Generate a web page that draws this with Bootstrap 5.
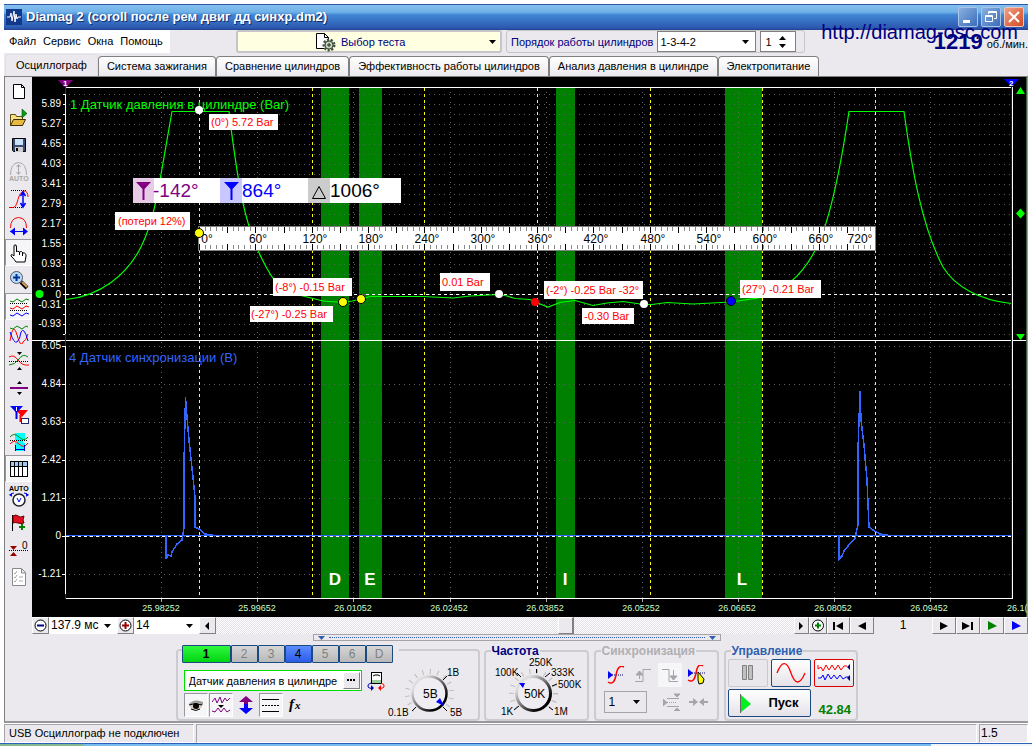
<!DOCTYPE html>
<html lang="ru">
<head>
<meta charset="utf-8">
<meta name="viewport" content="width=device-width, initial-scale=1">
<title>Diamag 2</title>
<link href="https://cdn.jsdelivr.net/npm/bootstrap@5.3.0/dist/css/bootstrap.min.css" rel="stylesheet">
<style>
:root{--face:#ebe9ed;--edge:#a5a4a8;--navy:#000080}
body{font:11px/14px "Liberation Sans",Arial,sans-serif;color:#000;background:#fff}
button,input,select{font:inherit;color:inherit}
button{padding:0}
svg{display:block;flex:none}
.window{margin:0 4px;padding-top:4px}
.face{background:var(--face)}
.titlebar{height:26px;padding:0 4px 0 2px;background:linear-gradient(#2c59a8 0,#2c59a8 1px,#86c0ee 1px,#70b2e8 8px,#3f85d4 11px,#3a78c8 15px,#2c58b0 24px,#20408c)}
.titlebar h1{font-size:13px;font-weight:700;line-height:24px;color:#fff;text-shadow:1px 1px 0 #10306c}
.capbtns{gap:3px}
.capbtn{width:20px;height:20px;border:1px solid #a9c4e8;border-radius:2px;background:linear-gradient(135deg,#8ab2e0,#3a6cb8)}
.capbtn.close-btn{background:linear-gradient(135deg,#f0a088,#d24a20);border-color:#f0c4b8}
.menurow{height:24px}
.menu{background:#fff;height:23px;width:166px;padding:0 5px;gap:7px}
.menu a{color:#000;text-decoration:none;line-height:23px}
.testpick{width:266px;height:23px;margin-left:66px;background:#ffffe1;border:2px solid #c6c5c9;border-radius:3px;color:var(--navy)}
.testpick svg:first-child{margin-left:77px}
.order{height:23px;margin-left:4px;padding-left:4px;border:1px solid #c6c5c9;border-radius:3px;color:var(--navy);width:299px;gap:4px}
.well{appearance:none;border:1px solid #808080;background:#fff;color:#000;border-radius:0}
.arrowed{background:#fff url("data:image/svg+xml,%3Csvg xmlns='http://www.w3.org/2000/svg' width='7' height='4'%3E%3Cpath d='M0 0h7L3.500 4z'/%3E%3C/svg%3E") no-repeat right 6px center}
.rpm{font-size:22px;font-weight:700;line-height:22px;color:var(--navy)}
.watermark{position:absolute;right:10px;top:20px;font-size:20px;line-height:24px;color:var(--navy);white-space:nowrap}
.nav-tabs.scopes{--bs-nav-tabs-border-width:0;height:23px;border-bottom:1px solid #808080;padding-left:1px}
.scopes .nav-link{border:1px solid #808080;border-bottom:0;border-radius:4px 4px 0 0;margin:0;height:20px;padding:0 8px;line-height:19px;color:#000;background:linear-gradient(#fff,#ebe9ed)}
.scopes .nav-link.active{height:22px;line-height:20px;padding:0 10px;background:var(--face);color:#000}
.pane{border-left:1px solid #808080;border-bottom:2px solid #98979b}
.tools{width:27px}
.tool{width:27px;height:27px;border:0;background:none;display:flex;align-items:center;justify-content:center}
.mini{width:24px;height:24px;border:0;background:none;display:flex;align-items:center;justify-content:center}
.sunk{border:1px solid;border-color:#98979b #fff #fff #98979b;background:#f6f5f8}
.btn3d{border:1px solid;border-color:#fff #808080 #808080 #fff;background:var(--face);height:17px;display:flex;align-items:center;justify-content:center;flex:none}
.transport{height:17px}
.transport .well{border:0;height:17px;line-height:17px;font-size:12px;padding:0 2px}
.scroller{appearance:none;flex:1 1 0;min-width:0;height:17px;margin:0;background:repeating-conic-gradient(#fff 0 25%,#e2e0e6 0 50%) 0 0/2px 2px}
.scroller::-webkit-slider-thumb{appearance:none;width:16px;height:17px;background:var(--face);border:1px solid;border-color:#fff #808080 #808080 #fff;border-right-width:2px}
.splitter{width:408px;height:7px;border:1px solid var(--edge);color:#2f5fb0}
.splitter i{flex:1;height:0;border-top:1px dotted #2f5fb0;margin:0 4px}
.panels{padding-top:6px}
.panel{border:2px solid #cccbcf;border-radius:4px;min-width:0;margin:0;padding:0}
.channels{width:304px;height:72px;margin-top:2px}
fieldset.panel{height:74px}
.panel > legend{float:none;width:auto;margin:0 0 0 5px;padding:0 1px;font-size:12px;font-weight:700;line-height:8px;height:8px}
.chan{width:27px;height:18px;border:1px solid #1b4a80;border-radius:1px;background:linear-gradient(#d6d6d6,#b8b8b8);color:#808080;font-size:12px;line-height:15px}
.chanset{margin:-6px 0 0 4px;padding-right:6px;width:max-content;background:var(--face)}
.chan.first{width:49px;background:linear-gradient(#30f840,#00d410);color:#000;font-weight:700}
.chan.blue{background:linear-gradient(#5c8cff,#2c5ce8);color:#000}
.inputs{padding:7px 0 0 6px}
.sensor{width:178px;height:21px;border:1px solid #00e000;background:#fff;padding:1px}
.sensor input{border:0;flex:1;min-width:0;padding:0 3px;background:none}
.minis{gap:1px;margin-top:2px}
.run{border:1px solid #1b4a80;border-radius:2px;background:linear-gradient(#fff,#e4e2e8);display:flex;align-items:center;justify-content:center;width:40px;height:28px}
.run.off{border-color:#c8c7cb;background:#e9e7eb}
.run.red{border-color:#e00000}
.run.start{width:83px;font-size:13px;font-weight:700;gap:18px}
.green{color:#008000;font-size:13px;font-weight:700}
.status{height:19px;margin-top:1px;gap:2px}
.cell{border:1px solid;border-color:var(--edge) #fff #fff var(--edge);line-height:17px;padding-left:4px}
.tray{height:3px;background:linear-gradient(90deg,#86b890 0 84px,#78bcf0 84px 931px,#eef6fc 931px);border-top:1px solid #2f60b8}
.crisp{shape-rendering:crispEdges}
.lbl{fill:#f00;font-size:11px}
</style>
</head>
<body>
<div class="window position-relative">
 <header class="titlebar d-flex align-items-center">
  <svg width="16" height="16" viewBox="0 0 16 16"><rect width="16" height="16" fill="#12388c"/><path d="M1 8h3l1-4 1 8 2-10 1 11 1-8 1 5 1-2h3" fill="none" stroke="#fff"/></svg>
  <h1 class="m-0 ms-1 flex-grow-1">Diamag 2 (coroll после рем двиг дд синхр.dm2)</h1>
  <div class="capbtns d-flex">
   <button class="capbtn" aria-label="Свернуть"><svg width="18" height="18"><path d="M4 12h7v3H4z" fill="#fff"/></svg></button>
   <button class="capbtn" aria-label="Восстановить"><svg width="18" height="18" fill="none" stroke="#fff"><path d="M6.500 6V3.500h8v7H12M3.500 7.500h7v6h-7zM3 8.500h8M6 4.500h8"/></svg></button>
   <button class="capbtn close-btn" aria-label="Закрыть"><svg width="18" height="18" stroke="#fff" stroke-width="2"><path d="M4 4l10 10M14 4L4 14"/></svg></button>
  </div>
 </header>
 <div class="menurow face d-flex">
  <nav class="menu d-flex"><a href="#">Файл</a><a href="#">Сервис</a><a href="#">Окна</a><a href="#">Помощь</a></nav>
  <button class="testpick d-flex align-items-center">
   <svg width="22" height="20" viewBox="0 0 22 20"><path d="M1.500 1.500h8l4 4v11h-12z" fill="#fff" stroke="#000"/><path d="M9.500 1.500v4h4" fill="none" stroke="#000"/><circle cx="14" cy="13" r="5" fill="#b8c8b0" stroke="#405040" stroke-width="3" stroke-dasharray="2 1.500"/><circle cx="14" cy="13" r="4" fill="#c4d4bc" stroke="#405040"/><path d="M12 13h4M14 11v4" stroke="#203020"/></svg>
   <span class="ms-1 flex-grow-1 text-start">Выбор теста</span>
   <svg width="7" height="4" class="me-1"><path d="M0 0h7L3.500 4z"/></svg>
  </button>
  <div class="order d-flex align-items-center"><label for="ord">Порядок работы цилиндров</label>
   <select id="ord" class="well arrowed" style="width:99px;height:21px;padding:0 2px"><option>1-3-4-2</option></select>
   <div class="well d-flex align-items-center" style="width:36px;height:21px"><input aria-label="Цилиндр" value="1" class="border-0 p-0 ps-1" style="width:18px">
    <svg width="8" height="14"><path d="M0 5h7L3.500 1zM0 9h7l-3.500 4z"/></svg></div>
  </div>
  <div class="ms-auto d-flex align-items-center"><span class="rpm">1219</span><span class="ms-1 pt-1">об./мин.</span></div>
 </div>
 <div class="watermark">http://diamag-osc.com</div>
 <ul class="nav nav-tabs scopes face align-items-end flex-nowrap">
  <li class="nav-item"><a class="nav-link active" href="#">Осциллограф</a></li>
  <li class="nav-item"><a class="nav-link" href="#">Система зажигания</a></li>
  <li class="nav-item"><a class="nav-link" href="#">Сравнение цилиндров</a></li>
  <li class="nav-item"><a class="nav-link" href="#">Эффективность работы цилиндров</a></li>
  <li class="nav-item"><a class="nav-link" href="#">Анализ давления в цилиндре</a></li>
  <li class="nav-item"><a class="nav-link" href="#">Электропитание</a></li>
 </ul>
 <main class="pane face">
 <div class="d-flex">
  <div class="tools flex-shrink-0">
   <button class="tool" aria-label="Новый"><svg width="20" height="20"><path d="M4.500 3.500h8l3 3v11h-11zM12.500 3.500v3h3" fill="#fff" stroke="#000"/></svg></button>
   <button class="tool" aria-label="Открыть"><svg width="20" height="20"><path d="M1.500 17.500v-11h5l1 2h6v9z" fill="#f8e088" stroke="#605010"/><path d="M1.500 17.500l3-6h12l-3 6z" fill="#e8b840" stroke="#403000"/><path d="M13 1v9l5-4.500z" fill="#00a010" stroke="#003000" stroke-width=".5"/></svg></button>
   <button class="tool" aria-label="Сохранить"><svg width="20" height="20"><path d="M3.500 3.500h13v13h-12l-1-1z" fill="#3a4a78" stroke="#000"/><path d="M6 4h8v6H6z" fill="#c8e0f8"/><path d="M6 12h8v5H6z" fill="#ccc"/><path d="M7 13h2v3H7z" fill="#000"/></svg></button>
   <button class="tool" aria-label="Авто амплитуда" disabled><svg width="22" height="22" fill="none" stroke="#a8a8a8"><path d="M2.500 14q0-12 8-12.500 8 .5 8 12.500M10.500 4v9M8.500 6l2-2.500 2 2.500M8.500 11l2 2.500 2-2.500"/><text x="1" y="20" font-size="7" font-weight="700" fill="#a8a8a8" stroke="none">AUTO</text></svg></button>
   <button class="tool" aria-label="Амплитуда"><svg width="20" height="20" fill="none"><path d="M0 18.500h4q3 0 5-8t6-8.500q4 0 4 6" stroke="#f00"/><path d="M2 1.500h15M2 18.500h12" stroke="#000" stroke-dasharray="1 1"/><path d="M14 4v13M11.500 7L14 3l2.500 4M11.500 14l2.500 4 2.500-4" stroke="#00f" stroke-width="1.500"/></svg></button>
   <button class="tool" aria-label="Период"><svg width="20" height="20" fill="none"><path d="M1.500 12q0-10 8-10.500 8 .5 8 10.500" stroke="#f00"/><path d="M1 15.500h17" stroke="#00f"/><path d="M1 15.500l5-4v8zM19 15.500l-5-4v8z" fill="#00f"/></svg></button>
   <button class="tool sunk" aria-label="Рука"><svg width="20" height="20"><path d="M5.500 2q2-1 2 2v5l1-1 2 1 2-.5 1.500 1.500h1.500q2 1 1.500 3l-1 6h-9q-1-2-5-6 0-3 3 0V3z" fill="#fff" stroke="#000"/><path d="M10.500 9v3M13.500 10v3" stroke="#000"/></svg></button>
   <button class="tool" aria-label="Лупа"><svg width="20" height="20"><circle cx="7.500" cy="7.500" r="6" fill="#b8dcf8" stroke="#556"/><path d="M4 7.500h7M7.500 4v7" stroke="#00309c" stroke-width="2"/><path d="M12 12l6 6" stroke="#000" stroke-width="4"/><path d="M13 12l5 5" stroke="#d8a060" stroke-width="2"/></svg></button>
   <button class="tool sunk" aria-label="Раздельные осциллограммы"><svg width="20" height="20" fill="none"><path d="M1 4l3 1 4-3 5 3 4-3 3 1" stroke="#080"/><path d="M1 11l3 1 4-3 5 3 4-3 3 1" stroke="#f00"/><path d="M1 18l3 1 4-3 5 3 4-3 3 1" stroke="#00f"/><path d="M1 6.500h18M1 13.500h18" stroke="#000" stroke-dasharray="1 1"/></svg></button>
   <button class="tool" aria-label="Совмещённые"><svg width="20" height="20" fill="none"><path d="M1 4l3 1 4-3 5 3 4-3 2 1" stroke="#080"/><path d="M1 17q3-20 7-6t6 7q3-1 5-8" stroke="#f00"/><path d="M1 8q4 12 7 10 3-2 4-10 3-6 7 9" stroke="#00f"/></svg></button>
   <button class="tool" aria-label="Нулевая линия"><svg width="20" height="20" fill="none"><path d="M0 6q5-3 9 3t11 5" stroke="#f00"/><path d="M0 14q6 0 10-6t9-2" stroke="#080"/><path d="M0 10.500h20" stroke="#000" stroke-dasharray="1 1"/><path d="M8 1h5l-2.500 3zM8 19h5l-2.500-3z" fill="#000"/></svg></button>
   <button class="tool" aria-label="Разделитель"><svg width="20" height="20"><path d="M1 9h18v2H1z" fill="#800080"/><path d="M8 6h5l-2.500-3zM8 14h5l-2.500 3z"/></svg></button>
   <button class="tool" aria-label="Маркеры"><svg width="20" height="20"><path d="M7 5h12l-6 7z" fill="#f00"/><path d="M1 1h13L7.500 8z" fill="#00f"/><path d="M7.500 6v8" stroke="#00f" stroke-width="2"/><path d="M11.500 10v7" stroke="#f00" stroke-width="2"/><path d="M7.500 2v4" stroke="#fff"/><rect x="12.500" y="13.500" width="7" height="5" fill="#fff" stroke="#226"/></svg></button>
   <button class="tool" aria-label="Интервал"><svg width="20" height="20" fill="none"><path d="M6 1h10v7h-2v3h2v8H6v-8h2V8H6z" fill="#0ff"/><path d="M1 5q4-5 9 0t9 0" stroke="#080"/><path d="M1 12q4-5 9 0t9-1" stroke="#f00"/><path d="M1 8.500h18" stroke="#000" stroke-dasharray="1 1"/><path d="M6.500 13v6M15.500 13v6M7 17.500h8" stroke="#00c"/></svg></button>
   <button class="tool sunk" aria-label="Таблица"><svg width="20" height="20" class="crisp"><rect x="1.500" y="2.500" width="17" height="15" fill="#fff" stroke="#000"/><path d="M2 3h16v4H2z" fill="#a0c8f0"/><path d="M2 7.500h16M5.500 3v14M9.500 3v14M13.500 3v14" stroke="#000"/></svg></button>
   <button class="tool" aria-label="Авто вольт"><svg width="22" height="24"><text x="1" y="7" font-size="7" font-weight="700">AUTO</text><circle cx="11" cy="16" r="6" fill="#fff" stroke="#222" stroke-width="1.500"/><path d="M9 14l2 4 2-4" fill="none" stroke="#00f"/><path d="M2 12q0-3 4-3M20 12q0-3-4-3" fill="none" stroke="#00f"/><path d="M1 10h3v3zM21 10h-3v3z" fill="#00f"/></svg></button>
   <button class="tool" aria-label="Добавить закладку"><svg width="20" height="20"><path d="M3.500 2v16" stroke="#000"/><path d="M4 3q3-2 5 0t6 0l-1 4 1 3q-3 1-6 0t-5 0z" fill="#e01020" stroke="#600"/><path d="M13 11v6M10 14h6" stroke="#008000" stroke-width="2"/></svg></button>
   <button class="tool" aria-label="Установить ноль"><svg width="22" height="24"><path d="M2 8h7l-3.500 4zM2 18h7l-3.500-4z" fill="#900"/><path d="M1 12.500h19" stroke="#000" stroke-dasharray="1 1"/><text x="14" y="11" font-size="10">0</text></svg></button>
   <button class="tool" aria-label="Список" disabled><svg width="20" height="20" fill="none" stroke="#888"><path d="M3.500 1.500h9l4 4v13h-13zM12.500 2v4h4" fill="#fff"/><path d="M5 6l1 1 2-3M5 10l1 1 2-3M5 14l1 1 2-3M10 10h4M10 14h4" stroke="#aaa"/></svg></button>
  </div>
  <div class="flex-grow-1" style="min-width:0">
  <svg class="w-100" viewBox="32 77 996 540" font-family="Liberation Sans,Arial,sans-serif">
   <defs>
    <pattern id="dotsA" x="69" y="94" width="5" height="10" patternUnits="userSpaceOnUse"><path d="M0 0h1v1H0z" fill="#606060"/></pattern>
    <pattern id="dotsB" x="69" y="346" width="5" height="38" patternUnits="userSpaceOnUse"><path d="M0 0h1v1H0z" fill="#606060"/></pattern>
    <pattern id="tickA" x="62" y="94" width="4" height="10" patternUnits="userSpaceOnUse"><path d="M1 0h3v1H1z" fill="#fff"/></pattern>
    <pattern id="tickB" x="62" y="346" width="4" height="38" patternUnits="userSpaceOnUse"><path d="M0 0h4v1H0z" fill="#fff"/></pattern>
   </defs>
   <rect x="32" y="77" width="996" height="540"/>
   <g class="crisp">
    <path d="M321 88h28v510h-28zM359 88h23v510h-23zM556 88h19v510h-19zM725 88h37v510h-37z" fill="#008000"/>
    <rect x="66" y="90" width="945" height="250" fill="url(#dotsA)"/>
    <rect x="66" y="342" width="945" height="255" fill="url(#dotsB)"/>
    <path d="M161.500 92v506M257.500 92v506M353.500 92v506M450.500 92v506M546.500 92v506M642.500 92v506M738.500 92v506M834.500 92v506M930.500 92v506" stroke="#666" stroke-dasharray="1 4"/>
    <path d="M161.500 599v3M257.500 599v3M353.500 599v3M450.500 599v3M546.500 599v3M642.500 599v3M738.500 599v3M834.500 599v3M930.500 599v3" stroke="#aaa"/>
    <path d="M66 294.500h945M66 536.500h945" stroke="#fff" stroke-dasharray="3 3"/>
    <path d="M199.500 88v510M312.500 88v510M424.500 88v510M537.500 88v510M650.500 88v510M762.500 88v510M875.500 88v510" stroke="#ff0" stroke-dasharray="3 3"/>
    <path d="M65 87.500h948M32 340.500h995M65 598.500h948M65.500 87v512M1012.500 87v512" stroke="#fff"/>
    <rect x="62" y="92" width="4" height="246" fill="url(#tickA)"/><rect x="62" y="344" width="4" height="250" fill="url(#tickB)"/>
    <path d="M1011.500 87v511" stroke="#00f" /><path d="M65.500 80v14M65.500 334v12M65.500 594v5" stroke="#800080"/>
    <path d="M1026.500 77v540" stroke="#406040"/><path d="M1027.500 77v540" stroke="#999"/>
   </g>
   <path d="M58 80h15l-7.500 8z" fill="#800080"/><path d="M1004 79h15l-7.500 8z" fill="#00f"/>
   <g font-size="8" font-weight="700" fill="#fff"><text x="63" y="86">1</text><text x="1009" y="86">2</text></g>
   <path d="M1016 94h9l-4.500-7zM1016 334h9l-4.500 6zM1016 213.500l4.500-5 4.500 5-4.500 5z" fill="#0f0"/>
   <g font-size="13"><text x="70" y="109" fill="#0f0">1 Датчик давления в цилиндре (Bar)</text><text x="69" y="362" fill="#36f">4 Датчик синхронизации (В)</text></g>
   <path fill="none" stroke-width="1.200" stroke="#0f0" d="M66 299.500C100 296 127 275 141 247S158 190 172 111.500H229L231 128C238 180 243 220 261 257S285 290 303 296L323 301L343 302.500L352 301L361 299L370 296.500H423L453 298L470 296L499 294.500L507 296L515 298.500L530 299.500L535 302L548 307L560 302.500L575 300.500L593 305.500L607 303L623 301.500L644 304.500H652L667 302.500L693 304L731 302L758 298L778 290C795 282 812 262 822 235S841 165 849 111.500H904C912 170 922 227 943 267C955 287 980 300 1011 303.500"/>
   <path class="crisp" fill="none" stroke="#36f" stroke-width="1.500" d="M66 535.500H166V559L168 555L171 556L172 552L177 544L182 540L184 527V463L185.500 397L187 417L189 440L192 468L195 497V527L199 529L205 534L215 535.500H839V559L842 556L844 551L848 546L855 538L858 525V450L860 391L861 420L864 445L867 480L869 527L873 530L880 534L890 535.500H1011"/>
   <path class="crisp" d="M66 535.500h945" stroke="#36f"/>
   <g fill="#fff" font-size="10" text-anchor="end">
    <text x="61" y="107">5.89</text><text x="61" y="127">5.27</text><text x="61" y="147">4.65</text><text x="61" y="167">4.03</text><text x="61" y="187">3.41</text><text x="61" y="207">2.79</text><text x="61" y="227">2.17</text><text x="61" y="247">1.55</text><text x="61" y="267">0.93</text><text x="61" y="287">0.31</text><text x="61" y="298">0</text><text x="61" y="308">-0.31</text><text x="61" y="327">-0.93</text>
    <text x="61" y="349">6.05</text><text x="61" y="387">4.84</text><text x="61" y="425">3.63</text><text x="61" y="463">2.42</text><text x="61" y="501">1.21</text><text x="61" y="539">0</text><text x="61" y="577">-1.21</text>
   </g>
   <g fill="#cfc" font-size="9" text-anchor="middle"><text x="161" y="611">25.98252</text><text x="257" y="611">25.99652</text><text x="353" y="611">26.01052</text><text x="449" y="611">26.02452</text><text x="545" y="611">26.03852</text><text x="641" y="611">26.05252</text><text x="737" y="611">26.06652</text><text x="833" y="611">26.08052</text><text x="929" y="611">26.09452</text></g>
   <text x="1007" y="611" fill="#cfc" font-size="9">26.1(</text>
   <g fill="#fff" font-size="17" font-weight="700" text-anchor="middle"><text x="335" y="585">D</text><text x="370" y="585">E</text><text x="565" y="585">I</text><text x="742" y="585">L</text></g>
   <g class="crisp"><path d="M198 226h677v24H198z" fill="#fff" stroke="#808080"/>
    <path d="M199 229h676M199 247h676" stroke="#888" stroke-width="4" stroke-dasharray="1 4.635"/>
    <path d="M199 229.500h676M199 246.500h676" stroke="#000" stroke-width="6" stroke-dasharray="1 27.170"/></g>
   <g font-size="12" text-anchor="middle"><text x="207" y="243">0°</text><text x="258" y="243">60°</text><text x="315" y="243">120°</text><text x="371" y="243">180°</text><text x="427" y="243">240°</text><text x="483" y="243">300°</text><text x="540" y="243">360°</text><text x="596" y="243">420°</text><text x="653" y="243">480°</text><text x="709" y="243">540°</text><text x="765" y="243">600°</text><text x="821" y="243">660°</text><text x="860" y="243">720°</text></g>
   <path d="M133 178h268v25H133z" fill="#fff"/><path d="M133 178h21v25h-21z" fill="#e5cbe5"/><path d="M220 178h22v25h-22z" fill="#c8c8ff"/><path d="M308 178h22v25h-22z" fill="#ccc"/>
   <path d="M136 182h15l-6.500 7v11h-2v-11z" fill="#800080"/><path d="M224 182h15l-6.500 7v11h-2v-11z" fill="#00f"/><path d="M312.500 198.500h13l-6.500-12z" fill="none" stroke="#000"/>
   <g font-size="19"><text x="153" y="197" fill="#800080">-142°</text><text x="242" y="197" fill="#00f">864°</text><text x="330" y="197">1006°</text></g>
   <path d="M209 114h69v16h-69zM115 212h75v18h-75zM273 278h79v18h-79zM250 306h83v16h-83zM440 273h50v18h-50zM544 281h99v18h-99zM582 308h52v16h-52zM740 280h81v18h-81z" fill="#fff"/>
   <g class="lbl"><text x="211" y="126">(0°) 5.72 Bar</text><text x="118" y="225">(потери 12%)</text><text x="275" y="291">(-8°) -0.15 Bar</text><text x="251" y="318">(-27°) -0.25 Bar</text><text x="442" y="286">0.01 Bar</text><text x="546" y="294">(-2°) -0.25 Bar -32°</text><text x="584" y="320">-0.30 Bar</text><text x="742" y="293">(27°) -0.21 Bar</text></g>
   <g fill="#fff"><circle cx="199" cy="110" r="4"/><circle cx="499" cy="294" r="4"/><circle cx="644" cy="304" r="4"/><circle cx="535" cy="302" r="4" fill="#f00"/><circle cx="39.500" cy="294" r="4" fill="#0f0"/></g>
   <g fill="#ff0" stroke="#000"><circle cx="199" cy="233" r="4.500"/><circle cx="343" cy="302" r="4.500"/><circle cx="361" cy="299" r="4.500"/><circle cx="731" cy="301" r="4.500" fill="#00f"/></g>
  </svg>
  <div class="transport d-flex">
   <button class="btn3d" style="width:17px" aria-label="Уменьшить"><svg width="15" height="15"><circle cx="7.500" cy="7.500" r="5.500" fill="#fff" stroke="#000"/><path d="M4 7.500h7" stroke="#000080" stroke-width="2"/></svg></button>
   <select class="well arrowed" style="width:68px" aria-label="Развёртка"><option>137.9 мс</option></select>
   <button class="btn3d" style="width:17px" aria-label="Увеличить"><svg width="15" height="15"><circle cx="7.500" cy="7.500" r="5.500" fill="#fff" stroke="#000"/><path d="M4 7.500h7M7.500 4v7" stroke="#900" stroke-width="2"/></svg></button>
   <select class="well arrowed" style="width:65px" aria-label="Масштаб"><option>14</option></select>
   <button class="btn3d" style="width:17px" aria-label="Влево"><svg width="5" height="8"><path d="M4 0v8L0 4z"/></svg></button>
   <input type="range" class="scroller" min="0" max="1000" value="608" aria-label="Положение">
   <button class="btn3d" style="width:15px" aria-label="Вправо"><svg width="5" height="8"><path d="M0 0v8l4-4z"/></svg></button>
   <button class="btn3d" style="width:18px" aria-label="Приблизить"><svg width="14" height="15"><circle cx="7" cy="7.500" r="5.500" fill="#fff" stroke="#000"/><path d="M4 7.500h6M7 4.500v6" stroke="#008000" stroke-width="2"/></svg></button>
   <button class="btn3d" style="width:23px" aria-label="В начало"><svg width="12" height="8"><path d="M0 0h2v8H0zM10 0v8L3 4z"/></svg></button>
   <button class="btn3d" style="width:24px" aria-label="Назад"><svg width="9" height="8"><path d="M8 0v8L0 4z"/></svg></button>
   <output class="text-center" style="width:58px;font-size:12px;line-height:17px">1</output>
   <button class="btn3d" style="width:24px" aria-label="Вперёд"><svg width="9" height="8"><path d="M0 0v8l8-4z"/></svg></button>
   <button class="btn3d" style="width:24px" aria-label="В конец"><svg width="12" height="8"><path d="M0 0v8l8-4zM9 0h2v8H9z"/></svg></button>
   <button class="btn3d" style="width:24px" aria-label="Воспроизвести"><svg width="9" height="9"><path d="M0 0v9l9-4z" fill="#008000"/></svg></button>
   <button class="btn3d" style="width:24px" aria-label="Далее"><svg width="9" height="9"><path d="M0 0v9l9-4z" fill="#00f"/></svg></button>
  </div>
  </div>
 </div>
  <div class="splitter mx-auto d-flex align-items-center px-1"><svg width="7" height="4" fill="#2f5fb0"><path d="M0 0h7L3.500 4z"/></svg><i></i><svg width="7" height="4" fill="#2f5fb0"><path d="M0 0h7L3.500 4z"/></svg></div>
  <div class="panels d-flex justify-content-center">
   <div class="panel channels">
    <div class="chanset d-flex"><button class="chan first">1</button><button class="chan">2</button><button class="chan">3</button><button class="chan blue">4</button><button class="chan">5</button><button class="chan">6</button><button class="chan">D</button></div>
    <div class="d-flex">
     <div class="inputs">
      <div class="d-flex align-items-center"><div class="sensor d-flex"><input aria-label="Датчик" value="Датчик давления в цилиндре"><button class="btn3d" style="width:17px" aria-label="Выбрать датчик"><svg width="9" height="3"><path d="M0 0h2v2H0zM3 0h2v2H3zM6 0h2v2H6z"/></svg></button></div>
       <button class="border-0 bg-transparent ms-1" aria-label="Прибор"><svg width="20" height="20" viewBox="0 0 20 20"><rect x="5.500" y="1.500" width="10" height="11" fill="#fff" stroke="#000"/><path d="M6 9h9v3H6z" fill="#9c9"/><path d="M7 5l2-1h3l2 1" stroke="#000" fill="none"/><path d="M5 12q-4 1-3 4 2 2 4 1" fill="none" stroke="#00a"/><path d="M15 12q4 1 3 4-2 2-4 1" fill="none" stroke="#f00"/><path d="M5 14v6l3-3z" fill="#00a"/><path d="M15 14v6l-3-3z" fill="#f00"/></svg></button></div>
      <div class="d-flex minis">
       <button class="mini sunk" aria-label="Показать"><svg width="16" height="14"><path d="M1 6q5-6 14-2v3H3z" fill="#999"/><ellipse cx="8" cy="8" rx="6" ry="3.500" fill="#d8c8b8"/><circle cx="8" cy="8" r="3"/><path d="M1 7q6-3 13 0M3 11q5 3 9 0" fill="none" stroke="#000"/></svg></button>
       <button class="mini sunk" aria-label="Фильтр"><svg width="18" height="18" fill="none" stroke="#800080"><path d="M0 6l3-4 2 5 3-6 2 6 3-5 2 3 3-3M0 15l3 1 3-4 3 4 3-4 3 4 3-2"/><path d="M6 9h6l-3 3z" fill="#000" stroke="none"/></svg></button>
       <button class="mini" aria-label="Инвертировать"><svg width="14" height="18"><path d="M7 0l7 6H9v4H5V6H0z" fill="#800080"/><path d="M7 18l7-6H9V8H5v4H0z" fill="#00f"/></svg></button>
       <button class="mini sunk" aria-label="Линии"><svg width="18" height="16" class="crisp" stroke="#000"><path d="M0 2.500h17M0 14.500h17"/><path d="M0 8.500h17" stroke-dasharray="2 1"/></svg></button>
       <button class="mini" aria-label="Функция"><svg width="16" height="18"><text x="1" y="13" font-family="Liberation Serif,serif" font-style="italic" font-weight="700" font-size="15">f</text><text x="7" y="13" font-family="Liberation Serif,serif" font-style="italic" font-weight="700" font-size="11">x</text></svg></button>
      </div>
     </div>
     <svg width="92" height="56" viewBox="386 664 92 56" font-size="10" class="ms-auto">
      <defs><linearGradient id="rim" x2="1" y2="1"><stop offset=".2" stop-color="#ddd"/><stop offset=".8" stop-color="#000"/></linearGradient></defs>
      <circle cx="429.500" cy="694.500" r="22" fill="none" stroke="#bbb" stroke-width="5" stroke-dasharray="1 6.600" stroke-dashoffset="3"/><path d="M414 711l16-16 16 16v9h-32z" fill="#ebe9ed"/>
      <circle cx="429.500" cy="694.500" r="17" fill="#efedf1" stroke="url(#rim)" stroke-width="2.500"/>
      <path d="M436 703l4-4 4 8z" fill="#00f"/><path d="M443 681l4-4M443 708l4 4M416 708l-4 4" stroke="#000"/>
      <text x="423" y="699" font-size="12">5В</text><text x="447" y="677">1В</text><text x="388" y="717">0.1В</text><text x="450" y="717">5В</text></svg>
    </div>
   </div>
   <fieldset class="panel" style="width:105px;margin-left:4px"><legend style="color:#000080">Частота</legend>
    <svg width="100" height="64" viewBox="486 656 100 64" font-size="10">
     <circle cx="533.500" cy="694.500" r="22" fill="none" stroke="#bbb" stroke-width="5" stroke-dasharray="1 6.600"/><path d="M517 711l16-16 16 16v9h-32z" fill="#ebe9ed"/>
     <circle cx="533.500" cy="694.500" r="17" fill="#efedf1" stroke="url(#rim)" stroke-width="3"/>
     <path d="M519 684h6l-2 5z" fill="#00f"/><path d="M536.500 674v-4M521 678l-4-4M545 678l5-4M552 687l5-2M549 708l4 3M519 707l-5 4" stroke="#000"/>
     <text x="524" y="699" font-size="12">50K</text><text x="529" y="667">250K</text><text x="495" y="677">100K</text><text x="551" y="677">333K</text><text x="558" y="689">500K</text><text x="501" y="716">1K</text><text x="554" y="716">1M</text></svg>
   </fieldset>
   <fieldset class="panel" style="width:125px;margin-left:5px"><legend style="color:#b0afb3">Синхронизация</legend>
    <div class="d-flex flex-column justify-content-between px-2 pt-2 pb-1" style="height:62px">
     <div class="d-flex align-items-center justify-content-between">
      <button class="mini" aria-label="Синхронизация"><svg width="18" height="18" fill="none"><path d="M1 5v8l5-4z" fill="#00f"/><path d="M5 9h12" stroke="#000080" stroke-dasharray="1 1"/><path d="M1 16q6 4 8-7t8-8" stroke="#f00" stroke-width="1.500"/></svg></button>
      <button class="mini" disabled aria-label="По фронту"><svg width="18" height="18" stroke="#a5a4a8" fill="none"><path d="M1 15.500h8v-12h8M5.500 13V5"/><path d="M2 9l3.500-4L9 9z" fill="#a5a4a8"/></svg></button>
      <button class="mini sunk border-0" disabled aria-label="По спаду"><svg width="18" height="18" stroke="#a5a4a8" fill="none"><path d="M1 3.500h7v12h9M12.500 4v9"/><path d="M9 10l3.500 4 3.500-4z" fill="#a5a4a8"/></svg></button>
      <button class="mini" aria-label="Выбрать уровень"><svg width="20" height="20" fill="none"><path d="M1 4v8l5-4z" fill="#00f"/><path d="M5 8h14" stroke="#000080" stroke-dasharray="1 1"/><path d="M1 15q6 4 8-7t7-7" stroke="#f00" stroke-width="1.500"/><path d="M11 7l6 7-1 4-4 1-1-4z" fill="#ff0" stroke="#000"/></svg></button>
     </div>
     <div class="d-flex align-items-center">
      <select class="well arrowed" disabled aria-label="Канал синхронизации" style="width:48px;height:22px;border:1px solid #a5a4a8;background-color:#ebe9ed;padding:0 4px;font-size:12px;opacity:1"><option>1</option></select>
      <svg width="18" height="18" class="ms-3" fill="#a5a4a8" stroke="#a5a4a8"><path d="M0 6v7l4-3.500z"/><path d="M4 5.500h12M4 13.500h12" stroke-width="1"/><path d="M4 9.500h9" stroke-dasharray="1 1"/><path d="M11 1h6l-3 3zM11 18h6l-3-3z"/></svg>
      <svg width="20" height="12" class="ms-2" fill="#a5a4a8"><path d="M0 5h4V2l5 4-5 4V7H0zM19 5h-4V2l-5 4 5 4V7h4z"/></svg>
     </div>
    </div>
   </fieldset>
   <fieldset class="panel" style="width:134px;margin-left:5px"><legend style="color:#2f5fb0">Управление</legend>
    <div class="d-flex" style="gap:3px;padding:4px 2px 0">
     <button class="run off" disabled aria-label="Пауза"><svg width="12" height="16" fill="#c0c0c0" stroke="#808080"><path d="M.5.500h4v14h-4zM6.500.500h4v14h-4z"/></svg></button>
     <button class="run" aria-label="Синусоида"><svg width="30" height="22"><path d="M1 11C6-2 11-1 15 11S24 23 29 11" fill="none" stroke="#f00" stroke-width="1.300"/></svg></button>
     <button class="run red" aria-label="Развёртка"><svg width="34" height="20" fill="none"><path d="M1 2v4l3-2 2 4 3-6 3 5 3-5 3 5 3-5 3 5 3-4h3" stroke="#f00"/><path d="M1 15h3l2-3 2 5 3-6 3 5 3-4 3 4 3-4 3 4 3-2h3" stroke="#00f"/><path d="M33 1v6l-3-3zM33 12v6l-3-3z" fill="#000080"/></svg></button>
    </div>
    <div class="d-flex align-items-end" style="padding:2px 2px 0">
     <button class="run start"><svg width="11" height="19"><path d="M0 0v19l11-9z" fill="#00f020"/><path d="M.5 0v19" stroke="#666"/></svg>Пуск</button>
     <output class="green ms-2">42.84</output>
    </div>
   </fieldset>
  </div>
 </main>
 <footer class="status face d-flex"><div class="cell" style="width:190px">USB Осциллограф не подключен</div><div class="cell flex-grow-1"></div><div class="cell" style="width:49px;font-size:12px;padding-left:1px">1.5</div></footer>
</div>
<div class="tray"></div>
<script src="https://cdn.jsdelivr.net/npm/bootstrap@5.3.0/dist/js/bootstrap.bundle.min.js"></script>
</body>
</html>
